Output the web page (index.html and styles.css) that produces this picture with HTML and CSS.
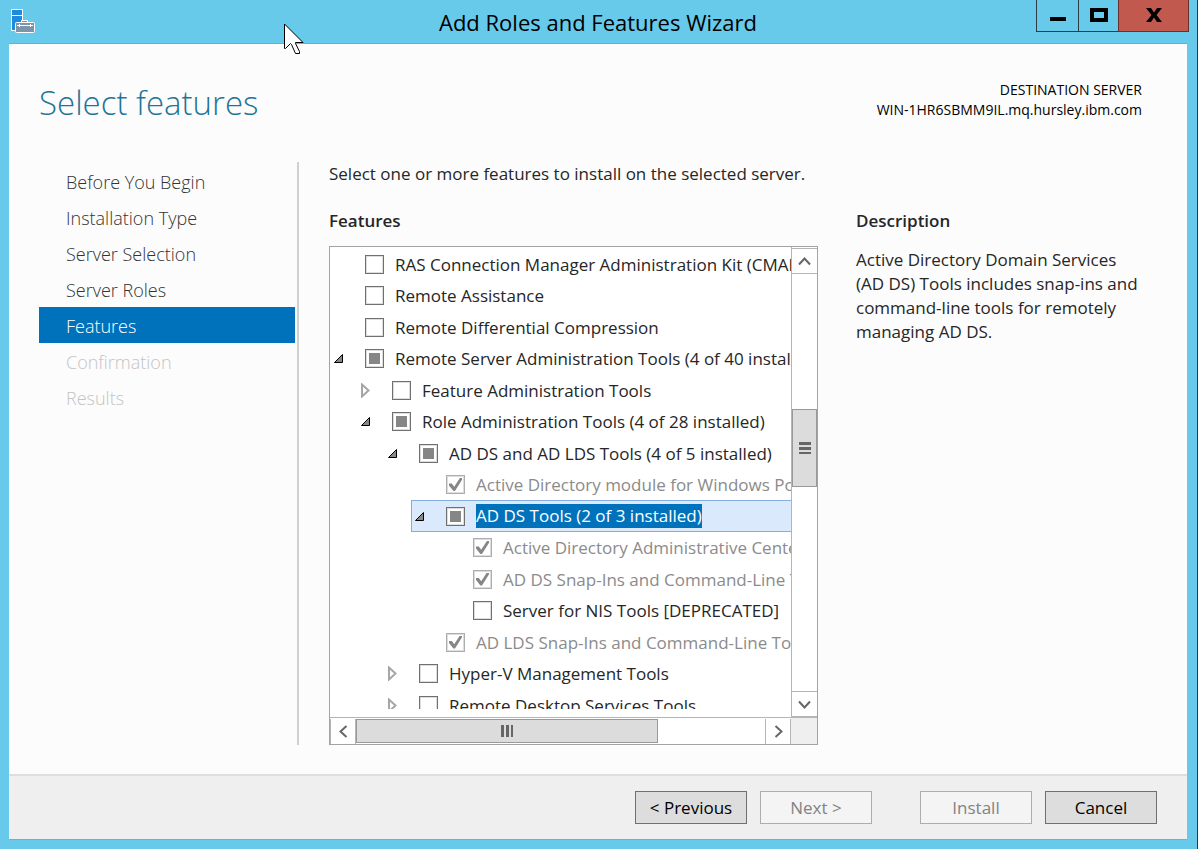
FILE: index.html
```html
<!DOCTYPE html>
<html lang="en">
<head>
<meta charset="utf-8">
<title>Add Roles and Features Wizard</title>
<link rel="stylesheet" href="styles.css">
</head>
<body>
<div class="window">
  <header class="titlebar">
    <svg class="app-icon" width="26" height="26" viewBox="0 0 26 26" aria-hidden="true">
      <path d="M1.5 1.5h11v21h-11z" fill="#1e8be0" stroke="#fff"/>
      <path d="M1 7.500h12" stroke="#fff"/>
      <path d="M11.500 14.500v-2h6v2" fill="#7d95ab" stroke="#fff"/>
      <rect x="5.500" y="14.500" width="19" height="10" rx="1" fill="#7d95ab" stroke="#fff"/>
      <path d="M7 17.500h16M9.500 16v3M20.500 16v3" stroke="#fff"/>
    </svg>
    <h1 class="window-title">Add Roles and Features Wizard</h1>
    <div class="window-controls">
      <button class="control minimize" type="button" aria-label="Minimize"><svg width="16" height="16" viewBox="0 0 16 16"><path d="M0 10h16v4H0z"/></svg></button>
      <button class="control maximize" type="button" aria-label="Maximize"><svg width="18" height="16" viewBox="0 0 18 16"><path fill-rule="evenodd" d="M0 1h18v14H0zM4 5v6h10V5z"/></svg></button>
      <button class="control close" type="button" aria-label="Close"><svg width="16" height="16" viewBox="0 0 16 16"><path d="M0 1h5l3 4.500L11 1h5l-5.500 7L16 15h-5l-3-4.500L5 15H0l5.500-7z"/></svg></button>
    </div>
  </header>

  <main class="page">
    <div class="page-header">
      <h2 class="page-title">Select features</h2>
      <p class="destination">DESTINATION SERVER<br>WIN-1HR6SBMM9IL.mq.hursley.ibm.com</p>
    </div>
    <div class="columns">
      <nav class="steps" aria-label="Wizard steps">
        <a class="step" href="#">Before You Begin</a>
        <a class="step" href="#">Installation Type</a>
        <a class="step" href="#">Server Selection</a>
        <a class="step" href="#">Server Roles</a>
        <a class="step current" href="#" aria-current="step">Features</a>
        <a class="step pending" aria-disabled="true">Confirmation</a>
        <a class="step pending" aria-disabled="true">Results</a>
      </nav>
      <div class="content">
        <p class="intro">Select one or more features to install on the selected server.</p>
        <div class="panels">
          <section class="features">
            <h3 class="section-title">Features</h3>
            <div class="listbox">
              <div class="viewport">
                <ul class="tree">
                  <li class="row"><span class="expander"></span><input class="box" type="checkbox" id="f1"><label class="name" for="f1">RAS Connection Manager Administration Kit (CMAK)</label></li>
                  <li class="row"><span class="expander"></span><input class="box" type="checkbox" id="f2"><label class="name" for="f2">Remote Assistance</label></li>
                  <li class="row"><span class="expander"></span><input class="box" type="checkbox" id="f3"><label class="name" for="f3">Remote Differential Compression</label></li>
                  <li class="row"><button class="expander open" type="button" aria-label="Collapse"><svg width="11" height="11" viewBox="0 0 11 11"><path d="M1.500 9.500h8v-8z"/></svg></button><input class="box partial" type="checkbox" id="f4"><label class="name" for="f4">Remote Server Administration Tools (4 of 40 installed)</label></li>
                  <li class="row level-1"><button class="expander" type="button" aria-label="Expand"><svg width="9" height="15" viewBox="0 0 9 15"><path d="M1 1.500v12L7.500 7.500z"/></svg></button><input class="box" type="checkbox" id="f5"><label class="name" for="f5">Feature Administration Tools</label></li>
                  <li class="row level-1"><button class="expander open" type="button" aria-label="Collapse"><svg width="11" height="11" viewBox="0 0 11 11"><path d="M1.500 9.500h8v-8z"/></svg></button><input class="box partial" type="checkbox" id="f6"><label class="name" for="f6">Role Administration Tools (4 of 28 installed)</label></li>
                  <li class="row level-2"><button class="expander open" type="button" aria-label="Collapse"><svg width="11" height="11" viewBox="0 0 11 11"><path d="M1.500 9.500h8v-8z"/></svg></button><input class="box partial" type="checkbox" id="f7"><label class="name" for="f7">AD DS and AD LDS Tools (4 of 5 installed)</label></li>
                  <li class="row level-3"><span class="expander"></span><input class="box" type="checkbox" id="f8" checked disabled><label class="name" for="f8">Active Directory module for Windows PowerShell</label></li>
                  <li class="row level-3 selected"><button class="expander open" type="button" aria-label="Collapse"><svg width="11" height="11" viewBox="0 0 11 11"><path d="M1.500 9.500h8v-8z"/></svg></button><input class="box partial" type="checkbox" id="f9"><label class="name" for="f9">AD DS Tools (2 of 3 installed)</label></li>
                  <li class="row level-4"><span class="expander"></span><input class="box" type="checkbox" id="f10" checked disabled><label class="name" for="f10">Active Directory Administrative Center</label></li>
                  <li class="row level-4"><span class="expander"></span><input class="box" type="checkbox" id="f11" checked disabled><label class="name" for="f11">AD DS Snap-Ins and Command-Line Tools</label></li>
                  <li class="row level-4"><span class="expander"></span><input class="box" type="checkbox" id="f12"><label class="name" for="f12">Server for NIS Tools [DEPRECATED]</label></li>
                  <li class="row level-3"><span class="expander"></span><input class="box" type="checkbox" id="f13" checked disabled><label class="name" for="f13">AD LDS Snap-Ins and Command-Line Tools</label></li>
                  <li class="row level-2"><button class="expander" type="button" aria-label="Expand"><svg width="9" height="15" viewBox="0 0 9 15"><path d="M1 1.500v12L7.500 7.500z"/></svg></button><input class="box" type="checkbox" id="f14"><label class="name" for="f14">Hyper-V Management Tools</label></li>
                  <li class="row level-2"><button class="expander" type="button" aria-label="Expand"><svg width="9" height="15" viewBox="0 0 9 15"><path d="M1 1.500v12L7.500 7.500z"/></svg></button><input class="box" type="checkbox" id="f15"><label class="name" for="f15">Remote Desktop Services Tools</label></li>
                </ul>
              </div>
              <div class="scrollbar vertical">
                <button class="arrow" type="button" aria-label="Scroll up"><svg width="13" height="13" viewBox="0 0 13 13"><path d="M1 9.500l5.500-6 5.500 6"/></svg></button>
                <div class="track"><div class="thumb"><span class="grip"></span></div></div>
                <button class="arrow" type="button" aria-label="Scroll down"><svg width="13" height="13" viewBox="0 0 13 13"><path d="M1 3.500l5.500 6 5.500-6"/></svg></button>
              </div>
              <div class="scrollbar horizontal">
                <button class="arrow" type="button" aria-label="Scroll left"><svg width="13" height="13" viewBox="0 0 13 13"><path d="M9.500 1l-6 5.500 6 5.500"/></svg></button>
                <div class="track"><div class="thumb"><span class="grip"></span></div></div>
                <button class="arrow" type="button" aria-label="Scroll right"><svg width="13" height="13" viewBox="0 0 13 13"><path d="M3.500 1l6 5.500-6 5.500"/></svg></button>
              </div>
              <div class="corner"></div>
            </div>
          </section>
          <section class="description">
            <h3 class="section-title">Description</h3>
            <p class="description-text">Active Directory Domain Services (AD DS) Tools includes snap-ins and command-line tools for remotely managing AD DS.</p>
          </section>
        </div>
      </div>
    </div>
  </main>

  <footer class="actions">
    <button class="action" type="button">&lt; Previous</button>
    <button class="action" type="button" disabled>Next &gt;</button>
    <button class="action install" type="button" disabled>Install</button>
    <button class="action" type="button">Cancel</button>
  </footer>
</div>
<svg class="pointer" width="20" height="33" viewBox="0 0 20 33" aria-hidden="true">
  <path d="M.5 1v24.500h1l5-5 1 1 4 9h4v-2l-4-8v-1h7.500z" fill="#fff" stroke="#000"/>
</svg>
</body>
</html>
```
FILE: styles.css
```css
* { box-sizing: border-box; }

body, h1, h2, h3, p, ul { margin: 0; padding: 0; }

body, button {
  font-family: "Open Sans", "Noto Sans", sans-serif;
  font-size: 17px;
}

button { padding: 0; }

.window {
  display: flex;
  flex-direction: column;
  min-height: 100vh;
  padding: 0 10px 9px 9px;
  background: #67caeb;
  border-right: 1px solid #1d3f4c;
}

.titlebar {
  display: grid;
  grid-template-columns: 151px 1fr 151px;
  height: 43px;
}

.app-icon { margin: 8px 0 0 1px; }

.window-title {
  font-size: 22px;
  font-weight: 400;
  line-height: 44px;
  text-align: center;
}

.window-controls {
  display: flex;
  height: 32px;
  margin-right: -2px;
}

.control {
  display: flex;
  align-items: center;
  justify-content: center;
  width: 40px;
  padding-bottom: 1px;
  border: 1px solid #2b3e46;
  border-width: 0 0 1px 1px;
  background: transparent;
}

.minimize { width: 42px; }
.control.close {
  flex: 1;
  border-right-width: 1px;
  border-color: #6b2f2b;
  background: #c2594f;
}

.page {
  display: flex;
  flex: 1;
  flex-direction: column;
  padding: 36px 45px 29px 30px;
  background: #fcfcfc;
  border-top: 1px solid #7fa9b8;
}

.page-header {
  display: flex;
  justify-content: space-between;
  height: 82px;
}

.page-title {
  color: #1e7596;
  font-size: 33px;
  font-weight: 300;
  line-height: 46px;
}

.destination {
  font-size: 14px;
  line-height: 20px;
  text-align: right;
}

.columns { display: flex; flex: 1; }

.steps {
  width: 260px;
  padding: 1px 2px 0 0;
  border-right: 2px solid #d0d0d0;
}

.step {
  display: block;
  padding: 2px 0 0 27px;
  color: #333;
  font-size: 18px;
  font-weight: 300;
  line-height: 34px;
  text-decoration: none;
}

.step.current { color: #fff; background: #0072bc; }
.step.pending { color: #c4c4c4; }

.content {
  display: flex;
  flex: 1;
  flex-direction: column;
  padding-left: 30px;
  color: #262626;
}

.intro { line-height: 24px; }

.panels { display: flex; flex: 1; gap: 38px; margin-top: 22px; }

.features { display: flex; flex: 1; flex-direction: column; min-width: 0; }

.section-title { font-size: 17px; font-weight: 600; line-height: 26px; }

.description { width: 286px; }

.description-text { margin-top: 14px; line-height: 24px; }

.listbox {
  display: grid;
  flex: 1;
  grid-template-columns: 1fr 26px;
  grid-template-rows: 1fr 27px;
  margin-top: 12px;
  background: #fff;
  border: 1px solid #a3a3a3;
}

.viewport { height: 454px; margin: 8px 0; overflow: hidden; min-width: 0; }

.tree { margin-top: -7px; list-style: none; }

.row {
  display: flex;
  align-items: center;
  height: 32px;
  white-space: nowrap;
  border: 1px solid transparent;
  border-width: 1px 0 1px 1px;
}
.row:nth-child(even) { height: 31px; }

.level-1 { margin-left: 27px; }
.level-2 { margin-left: 54px; }
.level-3 { margin-left: 81px; }
.level-4 { margin-left: 108px; }

.row.selected { background: #dbe9fd; border-color: #84acdd; }

.expander {
  display: flex;
  flex: none;
  align-items: center;
  width: 34px;
  height: 19px;
  padding-left: 3px;
  background: none;
  border: 0;
}
.expander path { fill: #fff; stroke: #a6a6a6; stroke-width: 2; }
.expander.open { padding-left: 2px; }
.expander.open path { fill: #888; stroke: #000; stroke-width: 1; }

.box {
  flex: none;
  appearance: none;
  width: 19px;
  height: 19px;
  margin: 0 11px 0 0;
  background: #fff;
  border: 1px solid #707070;
  box-shadow: inset 0 0 0 1px #ddd;
}
.box::before { display: block; width: 11px; height: 11px; margin: 3px; content: ""; }
.box.partial::before { background: #868686; }
.box:disabled { border-color: #adadad; }
.box:checked::before {
  width: 13px;
  height: 13px;
  margin: 2px;
  background: #868686;
  clip-path: polygon(0 42%, 22% 42%, 40% 68%, 84% 0, 100% 0, 100% 14%, 46% 100%, 34% 100%, 0 58%);
}
.box:disabled + .name { color: #8b8b8b; }

.selected .name { color: #fff; background: #0072bc; line-height: 24px; }

.scrollbar { display: flex; }
.vertical { flex-direction: column; padding-top: 1px; border-left: 1px solid #b5b5b5; }
.horizontal { padding: 1px 0; border-top: 1px solid #b5b5b5; }

.arrow {
  display: flex;
  flex: none;
  align-items: center;
  justify-content: center;
  width: 25px;
  height: 25px;
  background: #fff;
  border: 0 solid #b5b5b5;
}
.arrow path { fill: none; stroke: #666; stroke-width: 2; }
.vertical .arrow { border-width: 1px 0; height: 26px; }
.horizontal .arrow { border-width: 0 1px; width: 26px; }

.track { display: flex; flex: 1; }
.vertical .track { flex-direction: column; }

.thumb {
  display: flex;
  align-items: center;
  justify-content: center;
  background: #dcdcdc;
  border: 1px solid #999;
}
.vertical .thumb { height: 78px; margin-top: 135px; }
.horizontal .thumb { width: 302px; }

.grip { width: 12px; height: 12px; }
.vertical .grip { background: repeating-linear-gradient(#666 0 3px, #dcdcdc 3px 5px); }
.horizontal .grip { background: repeating-linear-gradient(90deg, #666 0 3px, #dcdcdc 3px 5px); }

.corner { background: #efefef; border: 1px solid #b5b5b5; border-width: 1px 0 0; }

.actions {
  display: flex;
  justify-content: flex-end;
  gap: 13px;
  padding: 15px 30px 15px;
  background: #efefef;
  border-top: 2px solid #dedede;
  border-bottom: 1px solid #86a9b5;
}

.action {
  width: 112px;
  height: 33px;
  color: #000;
  background: #ddd;
  border: 1px solid #707070;
}
.action:disabled { color: #838383; background: #f4f4f4; border-color: #adadad; }
.action.install { margin-left: 35px; }

.pointer { position: absolute; top: 23px; left: 284px; }
```
